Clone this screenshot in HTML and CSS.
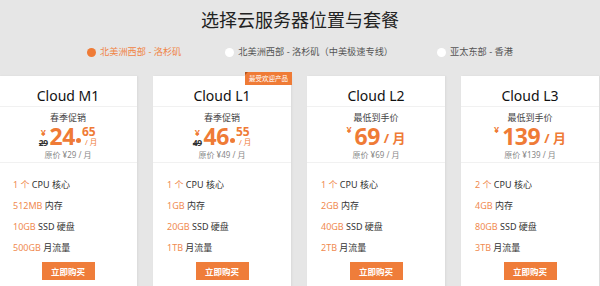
FILE: index.html
```html
<!DOCTYPE html>
<html lang="zh-CN">
<head>
<meta charset="UTF-8">
<meta name="viewport" content="width=device-width, initial-scale=1.0">
<title>选择云服务器位置与套餐</title>
<link rel="stylesheet" href="styles.css">
</head>
<body>

<h1 class="page-title">选择云服务器位置与套餐</h1>

<div class="regions">
  <label class="region active"><span class="dot"></span>北美洲西部 - 洛杉矶</label>
  <label class="region"><span class="dot"></span>北美洲西部 - 洛杉矶（中美极速专线）</label>
  <label class="region"><span class="dot"></span>亚太东部 - 香港</label>
</div>

<div class="plans">

  <div class="plan">
    <div class="plan-name">Cloud M1</div>
    <div class="plan-price">
      <div class="price-tag">春季促销</div>
      <div class="price-line">
        <span class="stack"><span class="yen">¥</span><s class="old">29</s></span>
        <span class="num">24</span><span class="point"></span>
        <span class="stack dec"><span class="cents">65</span><span class="per-small">/ 月</span></span>
      </div>
      <div class="price-orig">原价 ¥29 / 月</div>
    </div>
    <ul class="specs">
      <li><em>1 个</em> CPU 核心</li>
      <li><em>512MB</em> 内存</li>
      <li><em>10GB</em> SSD 硬盘</li>
      <li><em>500GB</em> 月流量</li>
    </ul>
    <button class="buy">立即购买</button>
  </div>

  <div class="plan">
    <span class="badge">最受欢迎产品</span>
    <div class="plan-name">Cloud L1</div>
    <div class="plan-price">
      <div class="price-tag">春季促销</div>
      <div class="price-line">
        <span class="stack"><span class="yen">¥</span><s class="old">49</s></span>
        <span class="num">46</span><span class="point"></span>
        <span class="stack dec"><span class="cents">55</span><span class="per-small">/ 月</span></span>
      </div>
      <div class="price-orig">原价 ¥49 / 月</div>
    </div>
    <ul class="specs">
      <li><em>1 个</em> CPU 核心</li>
      <li><em>1GB</em> 内存</li>
      <li><em>20GB</em> SSD 硬盘</li>
      <li><em>1TB</em> 月流量</li>
    </ul>
    <button class="buy">立即购买</button>
  </div>

  <div class="plan">
    <div class="plan-name">Cloud L2</div>
    <div class="plan-price">
      <div class="price-tag">最低到手价</div>
      <div class="price-line">
        <span class="yen top">¥</span>
        <span class="num">69</span>
        <span class="per">/ 月</span>
      </div>
      <div class="price-orig">原价 ¥69 / 月</div>
    </div>
    <ul class="specs">
      <li><em>1 个</em> CPU 核心</li>
      <li><em>2GB</em> 内存</li>
      <li><em>40GB</em> SSD 硬盘</li>
      <li><em>2TB</em> 月流量</li>
    </ul>
    <button class="buy">立即购买</button>
  </div>

  <div class="plan">
    <div class="plan-name">Cloud L3</div>
    <div class="plan-price">
      <div class="price-tag">最低到手价</div>
      <div class="price-line">
        <span class="yen top">¥</span>
        <span class="num">139</span>
        <span class="per">/ 月</span>
      </div>
      <div class="price-orig">原价 ¥139 / 月</div>
    </div>
    <ul class="specs">
      <li><em>2 个</em> CPU 核心</li>
      <li><em>4GB</em> 内存</li>
      <li><em>80GB</em> SSD 硬盘</li>
      <li><em>3TB</em> 月流量</li>
    </ul>
    <button class="buy">立即购买</button>
  </div>

</div>

</body>
</html>
```

FILE: styles.css
```css
/* Page */
body {
  margin: 0;
  background: #e6e6e6;
  font-family: "Noto Sans", "Noto Sans CJK SC", sans-serif;
  color: #333;
  overflow: hidden;
}

.page-title {
  margin: 0;
  padding-top: 8px;
  font-size: 18px;
  line-height: 24px;
  font-weight: normal;
  text-align: center;
  color: #222;
}

/* Region picker */
.regions {
  display: flex;
  justify-content: center;
  gap: 44px;
  margin-top: 12px;
  height: 16px;
  font-size: 9.2px;
  line-height: 16px;
  color: #555;
}

.region {
  display: flex;
  align-items: center;
  gap: 4px;
}

.region .dot {
  width: 9px;
  height: 9px;
  border-radius: 50%;
  background: #fff;
}

.region.active {
  color: #f08546;
}

.region.active .dot {
  background: #ef7b36;
}

/* Plan cards */
.plans {
  display: flex;
  gap: 16px;
  margin: 16px 0 0 -1px;
}

.plan {
  position: relative;
  width: 138px;
  height: 220px;
  background: #fff;
  box-shadow: 1px 0 2px rgba(0, 0, 0, 0.06);
}

.badge {
  position: absolute;
  top: -4px;
  right: -1px;
  width: 47px;
  height: 13px;
  background: #ef7b36;
  color: #fff;
  font-size: 6.5px;
  line-height: 13px;
  text-align: center;
}

.badge::before {
  content: "";
  position: absolute;
  left: 0;
  top: 0;
  border-top: 3px solid #b4531c;
  border-right: 3px solid transparent;
}

.plan-name {
  height: 21px;
  padding-top: 9px;
  border-bottom: 1px solid #f1f1f1;
  font-size: 14px;
  line-height: 21px;
  text-align: center;
  color: #111;
}

.plan-price {
  height: 55px;
  border-bottom: 1px solid #f1f1f1;
  text-align: center;
}

.price-tag {
  padding-top: 5px;
  font-size: 9px;
  line-height: 12px;
  color: #444;
}

.price-line {
  display: flex;
  justify-content: center;
  align-items: flex-end;
  height: 24px;
  color: #ef7b36;
  font-weight: bold;
}

.stack {
  display: flex;
  flex-direction: column;
  align-items: center;
}

.yen {
  font-size: 9px;
  line-height: 10px;
  font-weight: bold;
}

.yen.top {
  align-self: flex-start;
  margin-top: 1px;
  margin-right: 1px;
}

.old {
  font-size: 8.5px;
  line-height: 10px;
  color: #333;
  letter-spacing: -0.5px;
}

.num {
  font-size: 23px;
  line-height: 24px;
  letter-spacing: -0.5px;
  margin-left: 2px;
}

.point {
  width: 5px;
  height: 5px;
  margin: 0 1px 5px 1px;
  border-radius: 50%;
  background: #ef7b36;
}

.dec {
  align-items: flex-start;
  margin-bottom: 1px;
}

.cents {
  font-size: 12px;
  line-height: 13px;
}

.per-small {
  margin-left: 3px;
  font-size: 7.5px;
  line-height: 9px;
  font-weight: normal;
}

.per {
  margin-left: 4px;
  font-size: 13px;
  line-height: 20px;
}

.price-orig {
  padding-top: 2px;
  font-size: 8px;
  line-height: 10px;
  color: #888;
}

/* Specs */
.specs {
  margin: 0;
  padding: 11px 0 0 14px;
  list-style: none;
  font-size: 9px;
  line-height: 21px;
  color: #333;
}

.specs em {
  font-style: normal;
  color: #f08a50;
}

.buy {
  display: block;
  width: 53px;
  height: 18px;
  margin: 4px auto 0;
  padding: 0;
  border: 0;
  background: #ef7d3a;
  color: #fff;
  font-family: inherit;
  font-size: 8.5px;
  font-weight: bold;
  cursor: pointer;
}
```
